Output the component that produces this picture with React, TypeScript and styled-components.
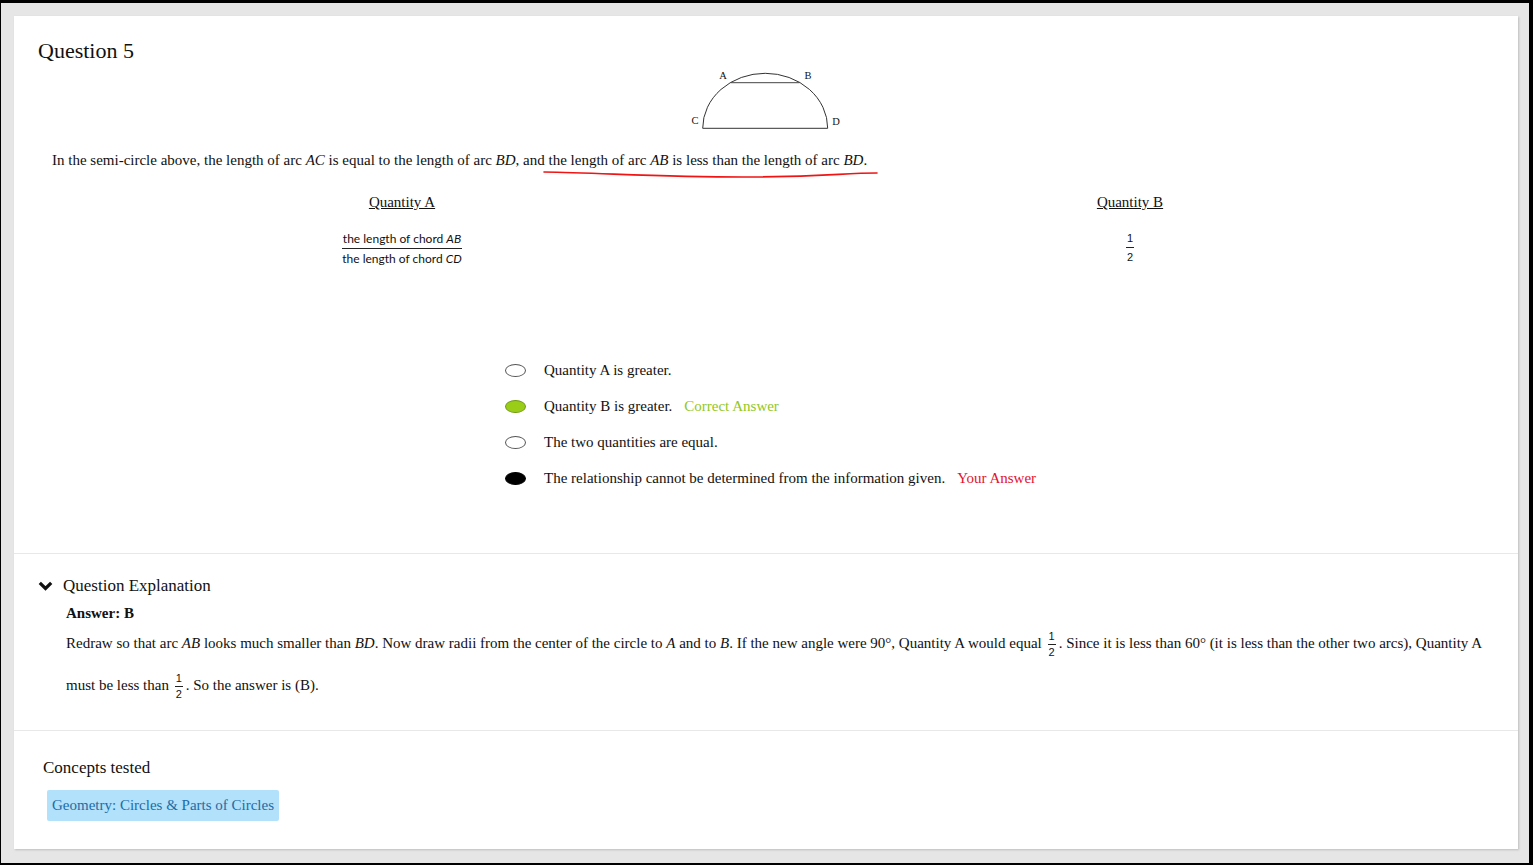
import React from "react"
import styled, { createGlobalStyle } from "styled-components"

const GlobalStyle = createGlobalStyle`
  html, body {
    margin: 0;
    padding: 0;
  }
  body {
    font-family: "Liberation Serif", "Times New Roman", serif;
    color: #111;
  }
`

const Frame = styled.div`
  height: 865px;
  box-sizing: border-box;
  border-style: solid;
  border-color: #000;
  border-width: 3px 4px 2px 1px;
  background: #e6e6e6;
  padding: 13px 11px 14px 13px;
`

const Card = styled.div`
  height: 100%;
  background: #fff;
  box-shadow: 1px 1px 2px rgba(0, 0, 0, 0.18);
  display: flex;
  flex-direction: column;
`

const Section = styled.section<{ divided?: boolean }>`
  border-top: ${p => (p.divided ? "1px solid #e8e8e8" : "none")};
`

const QuestionArea = styled(Section)`
  padding: 22px 24px 57px;
`

const Title = styled.h1`
  margin: 0;
  font-size: 22px;
  line-height: 26px;
  font-weight: normal;
`

const Diagram = styled.svg`
  display: block;
  margin: 2px auto 0;
`

const Stem = styled.p`
  margin: 18px 0 0 14px;
  font-size: 15px;
  line-height: 20px;
`

const Var = styled.i`
  font-style: italic;
`

const Marked = styled.span`
  position: relative;
`

const Scribble = styled.svg`
  position: absolute;
  right: -12px;
  top: 17px;
  pointer-events: none;
`

const Quantities = styled.div`
  display: grid;
  grid-template-columns: 1fr 1fr;
  margin-top: 22px;
`

const QuantityColumn = styled.div`
  display: flex;
  flex-direction: column;
  align-items: center;
`

const QuantityHead = styled.div`
  font-size: 15px;
  line-height: 20px;
  text-decoration: underline;
`

const Fraction = styled.span<{ size?: number; font?: string; inline?: boolean }>`
  display: inline-flex;
  flex-direction: column;
  align-items: center;
  font-family: ${p => p.font || `"Liberation Sans", Arial, sans-serif`};
  font-size: ${p => p.size || 11}px;
  line-height: ${p => (p.inline ? 13 : (p.size || 11) + 5)}px;
  vertical-align: middle;
  margin: ${p => (p.inline ? "6px 3px 7px 2px" : "0")};
`

const Numerator = styled.span`
  border-bottom: 1px solid #222;
  padding: 0 1px 1px;
`

const Denominator = styled.span`
  padding: 1px 1px 0;
`

const QuantityValue = styled.div`
  margin-top: 18px;
`

const Choices = styled.div`
  margin: 85px 0 0 467px;
  display: flex;
  flex-direction: column;
`

const Choice = styled.div`
  display: flex;
  align-items: center;
  height: 36px;
  font-size: 15px;
  gap: 18px;
`

const Bubble = styled.span<{ fill: string; edge: string }>`
  width: 21px;
  height: 13px;
  box-sizing: border-box;
  border-radius: 50%;
  background: ${p => p.fill};
  border: 1px solid ${p => p.edge};
  flex-shrink: 0;
`

const Flag = styled.span<{ tone: string }>`
  color: ${p => p.tone};
  margin-left: 12px;
`

const ExplainArea = styled(Section)`
  padding: 21px 24px 22px;
`

const ExplainHead = styled.div`
  display: flex;
  align-items: center;
  gap: 10px;
  font-size: 17px;
  line-height: 22px;
`

const ExplainBody = styled.div`
  padding-left: 28px;
`

const AnswerLine = styled.div`
  margin-top: 6px;
  margin-bottom: 1px;
  font-size: 15px;
  line-height: 20px;
  font-weight: bold;
`

const Explanation = styled.p`
  margin: 0;
  font-size: 15px;
  line-height: 20px;
`

const ConceptArea = styled(Section)`
  padding: 27px 24px 0 29px;
`

const ConceptHead = styled.div`
  font-size: 17px;
  line-height: 20px;
`

const Tag = styled.span`
  display: inline-block;
  margin: 12px 0 0 4px;
  padding: 0 5px;
  height: 31px;
  line-height: 31px;
  font-size: 15px;
  background: #b1e1fb;
  color: #1e6ca6;
  border-radius: 2px;
`

const Half = ({ inline }: { inline?: boolean }) => (
  <Fraction inline={inline}>
    <Numerator>1</Numerator>
    <Denominator>2</Denominator>
  </Fraction>
)

const options = [
  { text: "Quantity A is greater.", fill: "#fff", edge: "#555" },
  { text: "Quantity B is greater.", fill: "#9acd18", edge: "#6f9a10", flag: { label: "Correct Answer", tone: "#92c81a" } },
  { text: "The two quantities are equal.", fill: "#fff", edge: "#555" },
  { text: "The relationship cannot be determined from the information given.", fill: "#000", edge: "#000", flag: { label: "Your Answer", tone: "#e3112d" } },
]

export default function App() {
  return (
    <>
      <GlobalStyle />
      <Frame>
        <Card>
          <QuestionArea>
            <Title>Question 5</Title>
            <Diagram width="156" height="66" viewBox="0 0 156 66">
              <path d="M14.7 62.3 A62.5 55 0 0 1 139.7 62.3 Z" fill="none" stroke="#333" strokeWidth="1" />
              <line x1="42.3" y1="16.7" x2="111.6" y2="16.7" stroke="#444" strokeWidth="1" />
              <g fontFamily="Liberation Serif, serif" fontSize="10.5" fill="#111" textAnchor="middle">
                <text x="35" y="13">A</text>
                <text x="120" y="13">B</text>
                <text x="7" y="58">C</text>
                <text x="148" y="59">D</text>
              </g>
            </Diagram>
            <Stem>
              In the semi-circle above, the length of arc <Var>AC</Var> is equal to the length of arc <Var>BD</Var>,{" "}
              <Marked>
                and the length of arc <Var>AB</Var> is less than the length of arc <Var>BD</Var>.
                <Scribble width="336" height="12" viewBox="0 0 336 12">
                  <path d="M1 3 C 60 4, 120 8, 200 8 S 300 4, 334 4" fill="none" stroke="#f01414" strokeWidth="1.6" strokeLinecap="round" />
                </Scribble>
              </Marked>
            </Stem>
            <Quantities>
              <QuantityColumn>
                <QuantityHead>Quantity A</QuantityHead>
                <QuantityValue>
                  <Fraction size={12} font={`Lato, "Noto Sans", sans-serif`}>
                    <Numerator>the length of chord <Var>AB</Var></Numerator>
                    <Denominator>the length of chord <Var>CD</Var></Denominator>
                  </Fraction>
                </QuantityValue>
              </QuantityColumn>
              <QuantityColumn>
                <QuantityHead>Quantity B</QuantityHead>
                <QuantityValue>
                  <Half />
                </QuantityValue>
              </QuantityColumn>
            </Quantities>
            <Choices>
              {options.map(o => (
                <Choice key={o.text}>
                  <Bubble fill={o.fill} edge={o.edge} />
                  <span>
                    {o.text}
                    {o.flag && <Flag tone={o.flag.tone}>{o.flag.label}</Flag>}
                  </span>
                </Choice>
              ))}
            </Choices>
          </QuestionArea>

          <ExplainArea divided>
            <ExplainHead>
              <svg width="15" height="10" viewBox="0 0 15 10">
                <polyline points="1.8,1.8 7.5,7.5 13.2,1.8" fill="none" stroke="#111" strokeWidth="3.2" />
              </svg>
              Question Explanation
            </ExplainHead>
            <ExplainBody>
              <AnswerLine>Answer: B</AnswerLine>
              <Explanation>
                Redraw so that arc <Var>AB</Var> looks much smaller than <Var>BD</Var>. Now draw radii from the center of the
                circle to <Var>A</Var> and to <Var>B</Var>. If the new angle were 90°, Quantity A would equal <Half inline />. Since it
                is less than 60° (it is less than the other two arcs), Quantity A must be less than <Half inline />. So the answer is (B).
              </Explanation>
            </ExplainBody>
          </ExplainArea>

          <ConceptArea divided>
            <ConceptHead>Concepts tested</ConceptHead>
            <Tag>Geometry: Circles &amp; Parts of Circles</Tag>
          </ConceptArea>
        </Card>
      </Frame>
    </>
  )
}
